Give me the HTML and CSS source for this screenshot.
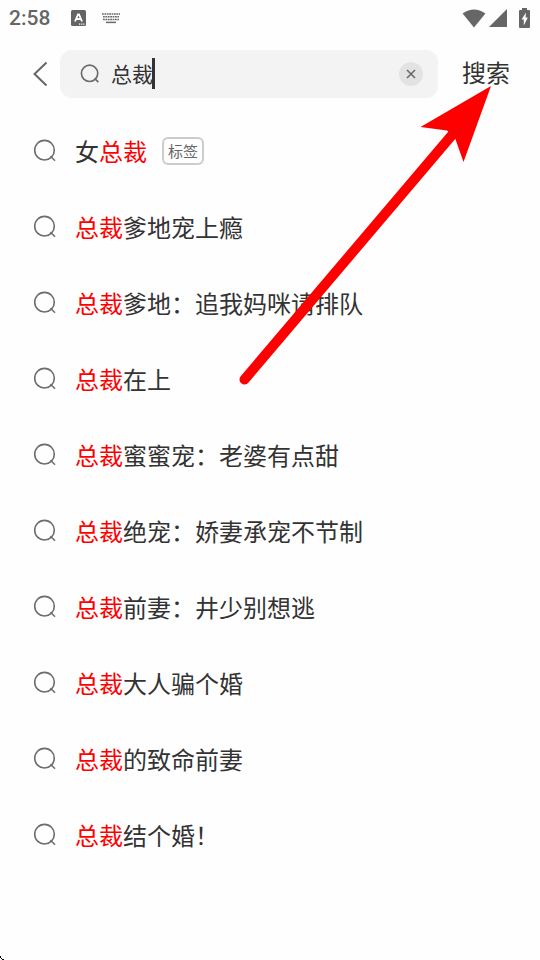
FILE: index.html
```html
<!DOCTYPE html>
<html lang="zh-CN">
<head>
<meta charset="utf-8">
<meta name="viewport" content="width=device-width, initial-scale=1">
<title>搜索</title>
<link rel="stylesheet" href="styles.css">
</head>
<body>
<svg class="defs" aria-hidden="true">
  <symbol id="search" viewBox="0 0 24 24"><circle cx="11.5" cy="11.200" r="9.8"/><path d="M17.500 17.200l4.500 4.500"/></symbol>
</svg>
<div class="screen">
  <div class="status">
    <span class="time">2:58</span>
    <svg class="app" viewBox="0 0 15 16" aria-hidden="true"><rect width="15" height="16" rx="1.500" fill="#646464"/><path d="M4 11.500L7 4.500h1L11 11.500M5.200 9h4.600" fill="none" stroke="#fff" stroke-width="1.800"/><path d="M8 14.200h1.200M10.200 14.200h1.200M12.300 14.200h1.200" stroke="#fff" stroke-width="1.200"/></svg>
    <svg class="keys" viewBox="0 0 20 12" aria-hidden="true"><g fill="none" stroke="#6a6a6a" stroke-width="1.500"><path d="M1 2h18M2 4.800h16M2 7.600h16" stroke-dasharray="1.800 .6"/><path d="M5 10.400h10"/></g></svg>
    <span class="fill"></span>
    <svg class="wifi" viewBox="0 0 24 19" aria-hidden="true"><path d="M.6 4.600Q12-3.600 23.400 4.600L12 18.600z" fill="#666"/></svg>
    <svg class="signal" viewBox="0 0 18 18" aria-hidden="true"><path d="M18 0v18H0z" fill="#666"/></svg>
    <svg class="battery" viewBox="0 0 11 20" aria-hidden="true"><path d="M3 0h5v2h2q1 0 1 1v16q0 1-1 1H1q-1 0-1-1V3q0-1 1-1h2z" fill="#666"/><path d="M7 4.500L2.600 11.500h2.200V17.500L8.800 9.500H6.500z" fill="#fff"/></svg>
  </div>
  <form class="header">
    <button class="back" type="button" aria-label="返回"><svg viewBox="0 0 16 26"><path d="M14.500 1.500L2.500 13L14.500 24.500"/></svg></button>
    <div class="box">
      <svg class="lens small" aria-hidden="true"><use href="#search"/></svg>
      <div class="field"><input type="text" value="总裁" aria-label="搜索内容"><span class="caret"></span></div>
      <button class="clear" type="button" aria-label="清除"><svg viewBox="0 0 10 10"><path d="M1 1l8 8M9 1L1 9"/></svg></button>
    </div>
    <button class="submit" type="button">搜索</button>
  </form>
  <ul class="list">
    <li><a href="#"><svg class="lens"><use href="#search"/></svg><span class="word">女<em>总裁</em></span><span class="tag">标签</span></a></li>
    <li><a href="#"><svg class="lens"><use href="#search"/></svg><span class="word"><em>总裁</em>爹地宠上瘾</span></a></li>
    <li><a href="#"><svg class="lens"><use href="#search"/></svg><span class="word"><em>总裁</em>爹地：追我妈咪请排队</span></a></li>
    <li><a href="#"><svg class="lens"><use href="#search"/></svg><span class="word"><em>总裁</em>在上</span></a></li>
    <li><a href="#"><svg class="lens"><use href="#search"/></svg><span class="word"><em>总裁</em>蜜蜜宠：老婆有点甜</span></a></li>
    <li><a href="#"><svg class="lens"><use href="#search"/></svg><span class="word"><em>总裁</em>绝宠：娇妻承宠不节制</span></a></li>
    <li><a href="#"><svg class="lens"><use href="#search"/></svg><span class="word"><em>总裁</em>前妻：井少别想逃</span></a></li>
    <li><a href="#"><svg class="lens"><use href="#search"/></svg><span class="word"><em>总裁</em>大人骗个婚</span></a></li>
    <li><a href="#"><svg class="lens"><use href="#search"/></svg><span class="word"><em>总裁</em>的致命前妻</span></a></li>
    <li><a href="#"><svg class="lens"><use href="#search"/></svg><span class="word"><em>总裁</em>结个婚！</span></a></li>
  </ul>
  <svg class="arrow" viewBox="0 0 256 302" aria-hidden="true"><path d="M9.500 297.500L217 53" stroke="#f00" stroke-width="10" stroke-linecap="round"/><path d="M256 4L185.500 45L212 48.500L220 56L228.500 80z" fill="#f00"/></svg>
  <svg class="corner" viewBox="0 0 4 4" aria-hidden="true"><path d="M0 0h1v2H0zM1 2h1v1H1zM2 3h2v1H2z"/></svg>
</div>
</body>
</html>
```
FILE: styles.css
```css
* { box-sizing: border-box; }
body {
  margin: 0;
  background: #fefefe;
  color: #333;
  font-family: "Noto Sans CJK SC", sans-serif;
}
button { border: 0; padding: 0; background: none; color: inherit; font: inherit; }
svg { display: block; flex: none; }
.defs { position: absolute; width: 0; height: 0; }
.screen { position: relative; min-height: 100vh; }
.status {
  display: flex;
  align-items: center;
  height: 36px;
  padding: 0 10px 0 9px;
}
.time {
  margin-right: 21px;
  color: #666;
  font: 500 21px/36px Roboto, sans-serif;
}
.app { width: 15px; height: 16px; }
.keys { width: 20px; height: 12px; margin-left: 15px; }
.fill { flex: 1; }
.wifi { width: 24px; height: 19px; }
.signal { width: 18px; height: 18px; margin: 0 12px 0 3px; }
.battery { width: 11px; height: 20px; }
.header {
  display: flex;
  align-items: center;
  margin-top: 14px;
  padding: 0 30px 0 32px;
}
.back { width: 28px; height: 48px; }
.back svg { width: 16px; height: 26px; fill: none; stroke: #666; stroke-width: 2; }
.box {
  display: flex;
  flex: 1;
  align-items: center;
  min-width: 0;
  height: 48px;
  padding: 0 15px 0 20px;
  border-radius: 12px;
  background: #f3f3f3;
}
.lens { width: 24px; height: 24px; fill: none; stroke: #6c6c6c; stroke-width: 1.6; }
.lens.small { width: 20px; height: 20px; stroke-width: 2; }
.field { position: relative; flex: 1; min-width: 0; margin-left: 11px; }
.field input {
  display: block;
  width: 100%;
  height: 48px;
  padding: 0 0 2px;
  border: 0;
  outline: 0;
  background: none;
  color: #333;
  font: 21px "Noto Sans CJK SC", sans-serif;
}
.caret {
  position: absolute;
  top: 8px;
  left: 41px;
  width: 3px;
  height: 31px;
  background: #333;
}
.clear {
  display: grid;
  place-items: center;
  width: 24px;
  height: 24px;
  border-radius: 50%;
  background: #e3e3e3;
}
.clear svg { width: 10px; height: 10px; fill: none; stroke: #666; stroke-width: 1.5; }
.submit { margin-left: 24px; padding-bottom: 6px; font-size: 24px; }
.list { margin: 0; padding: 15px 33px 0; list-style: none; }
.list a {
  display: flex;
  align-items: center;
  height: 76px;
  color: #333;
  font-size: 24px;
  text-decoration: none;
}
.list .lens { margin-right: 18px; }
.word { padding-bottom: 2px; }
.list em { color: #f00; font-style: normal; }
.tag {
  margin-left: 15px;
  padding: 0 4px;
  border: 2px solid #ccc;
  border-radius: 6px;
  color: #666;
  font-size: 15px;
  line-height: 24px;
}
.arrow {
  position: absolute;
  top: 82px;
  left: 235px;
  width: 256px;
  height: 302px;
  overflow: visible;
  pointer-events: none;
}
.corner { position: absolute; bottom: 0; left: 0; width: 4px; height: 4px; }
```
